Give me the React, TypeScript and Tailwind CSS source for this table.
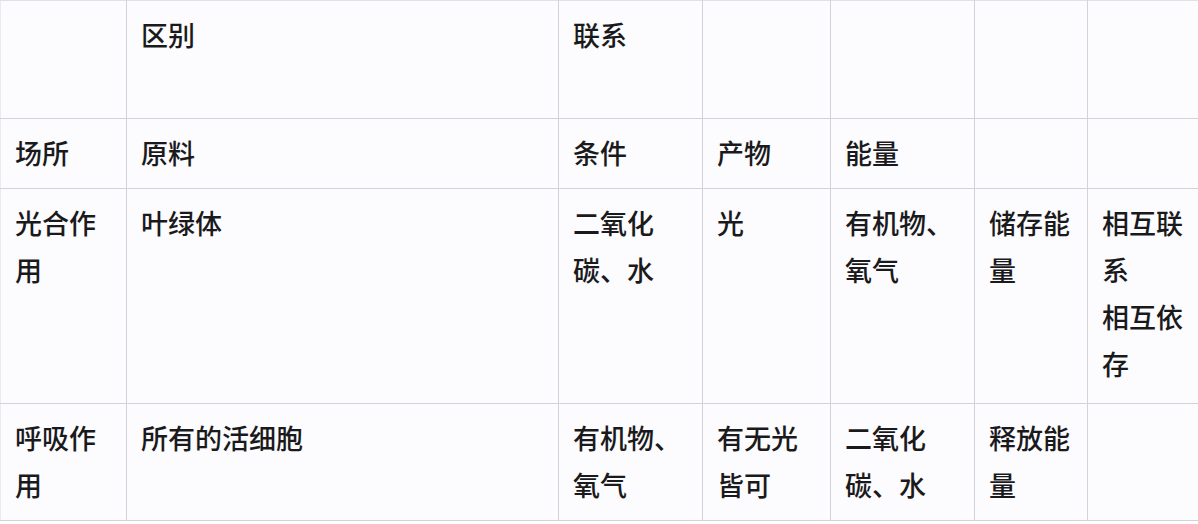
const rows: { h: string; cells: string[][] }[] = [
  { h: 'h-[118px]', cells: [[], ['区别'], ['联系'], [], [], [], []] },
  { h: 'h-[70px]', cells: [['场所'], ['原料'], ['条件'], ['产物'], ['能量'], [], []] },
  {
    h: 'h-[215px]',
    cells: [
      ['光合作', '用'],
      ['叶绿体'],
      ['二氧化', '碳、水'],
      ['光'],
      ['有机物、', '氧气'],
      ['储存能', '量'],
      ['相互联', '系', '相互依', '存'],
    ],
  },
  {
    h: 'h-[117px]',
    cells: [
      ['呼吸作', '用'],
      ['所有的活细胞'],
      ['有机物、', '氧气'],
      ['有无光', '皆可'],
      ['二氧化', '碳、水'],
      ['释放能', '量'],
      [],
    ],
  },
];

const widths = ['w-[126px]', 'w-[432px]', 'w-[144px]', 'w-[128px]', 'w-[144px]', 'w-[113px]', 'w-[111px]'];

export default function App() {
  return (
    <div className="w-[1198px] h-[524px] bg-white overflow-hidden">
      <table
        className="table-fixed border-collapse w-[1198px] bg-[#fcfbfd] text-[#1a1a1c] text-[27px] leading-[47px] font-medium"
        style={{ fontFamily: '"Noto Sans CJK SC", "Noto Sans", sans-serif' }}
      >
        <colgroup>
          {widths.map((w, i) => (
            <col key={i} className={w} />
          ))}
        </colgroup>
        <tbody>
          {rows.map((row, r) => (
            <tr key={r} className={row.h}>
              {row.cells.map((lines, c) => (
                <td
                  key={c}
                  className={
                    'align-top border border-[#d4d2d8] pt-[10px] pr-1 pl-[14px] ' +
                    (c === 0 ? 'border-l-[#ebeaee] ' : '') +
                    (c === 6 ? 'border-r-0 ' : '') +
                    (r === 0 ? 'border-t-[#e2e0e6] ' : '')
                  }
                >
                  {lines.map((l, i) => (
                    <div key={i} className="whitespace-nowrap">
                      {l}
                    </div>
                  ))}
                </td>
              ))}
            </tr>
          ))}
        </tbody>
      </table>
    </div>
  );
}
